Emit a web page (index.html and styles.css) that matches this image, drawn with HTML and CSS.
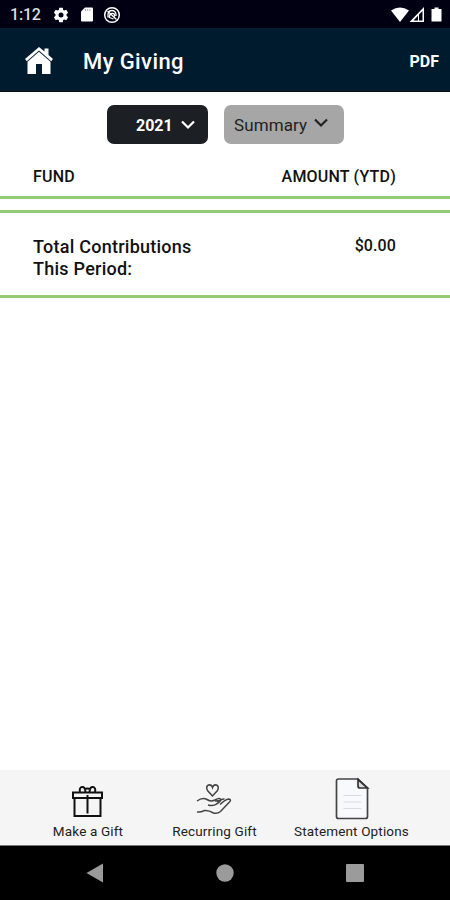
FILE: index.html
```
<!DOCTYPE html>
<html lang="en">
<head>
    <meta charset="UTF-8">
    <meta name="viewport" content="width=device-width, initial-scale=1.0">
    <title>My Giving</title>
    <link rel="stylesheet" href="styles.css">
</head>
<body>
    <div class="status-bar">
        <span class="clock">1:12</span>
        <svg class="icon-gear" width="16" height="16" viewBox="0 0 16 16">
            <path fill="#fff" fill-rule="evenodd" d="M6.2 0.8h3.6l.4 2.1 1.1.7 2-.8 1.8 3-1.6 1.4v1.6l1.6 1.4-1.8 3-2-.8-1.1.7-.4 2.1H6.2l-.4-2.1-1.1-.7-2 .8-1.8-3 1.6-1.4V7.200L.9 5.800l1.800-3 2 .8 1.100-.7zM8 5.500a2.500 2.500 0 1 0 0 5 2.500 2.500 0 0 0 0-5z"/>
        </svg>
        <svg class="icon-card" width="12" height="15" viewBox="0 0 12 15">
            <path fill="#fff" d="M4 .5h6.800q1.200 0 1.200 1.200v11.600q0 1.200-1.200 1.200H1.200Q0 14.500 0 13.300V4.500z"/>
            <path stroke="#99a" stroke-width=".8" d="M4.500 2v2M6.700 2v2M8.900 2v2"/>
        </svg>
        <svg class="icon-circle" width="18" height="18" viewBox="0 0 18 18" fill="none" stroke="#fff">
            <circle cx="9" cy="9" r="7.300" stroke-width="1.500"/>
            <path stroke-width="1.300" d="M5 11.500V8q.5-3.500 4-3.500t4 4v1.500M4.500 5l9 8.500M6.500 12q-.5-4 2.500-4.500t2.500 3M6.500 11.500l4 1.500"/>
        </svg>
        <svg class="icon-signal" width="53" height="16" viewBox="0 0 53 16">
            <path fill="#fff" d="M0 3.500Q9 -2.500 18 3.500L9 15z"/>
            <path fill="#fff" fill-rule="evenodd" d="M33 0v15H18.500zM31.500 4L28 7.600v5.900h3.500zM27 8.700l-4.500 4.800H27z"/>
            <path fill="#fff" d="M43.500.5h4V2H50.500v12.500h-10V2h3z"/>
        </svg>
    </div>
    <header class="header">
        <svg class="icon-home" width="30" height="29" viewBox="0 0 30 29">
            <path fill="#fff" d="M15 1L20.500 5.500V2.500h4v6.500L29 13l-1.800 2.200L15 4.600 2.800 15.200 1 13z"/>
            <path fill="#fff" d="M15 5.700l11.500 10V28H18V18h-6v10H3.500V15.700z"/>
        </svg>
        <h1>My Giving</h1>
        <span class="pdf">PDF</span>
    </header>
    <main>
        <div class="filters">
            <button class="filter year">
                <span>2021</span>
                <svg width="14" height="10" viewBox="0 0 14 10"><path class="chevron" d="M1 1.500l6 6 6-6"/></svg>
            </button>
            <button class="filter summary">
                <span>Summary</span>
                <svg width="14" height="10" viewBox="0 0 14 10"><path class="chevron" d="M1 1.500l6 6 6-6"/></svg>
            </button>
        </div>
        <div class="table-head">
            <span class="fund">FUND</span>
            <span class="amount">AMOUNT (YTD)</span>
        </div>
        <div class="total">
            <span class="total-label">Total Contributions<br>This Period:</span>
            <span class="total-value">$0.00</span>
        </div>
    </main>
    <footer class="tabs">
        <div class="tab gift">
            <svg width="34" height="44" viewBox="0 0 34 44" fill="none" stroke="#111" stroke-width="2">
                <path d="M2 15.500h29V21H2zM3.500 21V39h26V21M16.500 18v18.500"/>
                <path d="M14.500 15Q14 9.500 11 10t-2 5M18.500 15Q19 9.500 22 10t2 5M13.500 12q3-1 6 0"/>
            </svg>
            <span>Make a Gift</span>
        </div>
        <div class="tab recurring">
            <svg width="40" height="44" viewBox="0 0 40 44" fill="none" stroke="#444" stroke-width="1.500">
                <path d="M17.500 19L12.500 13.500q-2-4 1-5.500 3-.7 4 2.500 1-3.200 4-2.500 3 1.500 1 5.500z"/>
                <path d="M2 24Q7.500 20 12 22.500q4 2.500 8 .5 4-2.500 5.500-1t-4 5q-3 2.500-8.500 1"/>
                <path d="M22.500 25q4-3.500 7-3M25 27.500q5-5 9-5.500 3 .5 0 3.500L25.500 34.500q-3 2.500-7 1.500-5-3-9-2.500-4 2-7.500 1.500M20 24l5-.5"/>
            </svg>
            <span>Recurring Gift</span>
        </div>
        <div class="tab statement">
            <svg width="36" height="44" viewBox="0 0 36 44" fill="none">
                <path fill="#f8f9fc" stroke="#444" stroke-width="1.700" d="M4.500 2H24l9.500 9v28.500q0 2-2 2h-27q-2 0-2-2V4q0-2 2-2z"/>
                <path fill="#ddd" stroke="#333" stroke-width="1.700" d="M24 2.500V9q0 2 2 2h7.500z"/>
                <path stroke="#d9dce5" stroke-width="1.200" d="M9.500 18.500h18M9.500 25h18M9.500 31.500h18"/>
            </svg>
            <span>Statement Options</span>
        </div>
    </footer>
    <nav class="nav-bar">
        <svg width="18" height="20" viewBox="0 0 18 20"><path fill="#9b9b9b" d="M17 .5v19L.5 10z"/></svg>
        <svg width="18" height="18" viewBox="0 0 18 18"><circle fill="#9b9b9b" cx="9" cy="9" r="8.700"/></svg>
        <svg width="18" height="18" viewBox="0 0 18 18"><rect fill="#9b9b9b" width="18" height="18" rx="1"/></svg>
    </nav>
</body>
</html>
```
FILE: styles.css
```
* {
    box-sizing: border-box;
}
body {
    font-family: Roboto, "Liberation Sans", sans-serif;
    display: flex;
    flex-direction: column;
    height: 900px;
    margin: 0;
    background-color: #fff;
    color: #111;
}
svg {
    display: block;
    flex: none;
}
.status-bar {
    display: flex;
    align-items: center;
    height: 28px;
    padding: 1px 6px 0 10px;
    background-color: #000012;
    color: #ddd;
}
.clock {
    width: 43px;
    font-size: 16px;
    font-weight: 500;
    letter-spacing: -0.2px;
}
.icon-card {
    margin-left: 12px;
}
.icon-circle {
    margin-left: 10px;
}
.icon-signal {
    margin-left: auto;
}
.header {
    display: flex;
    align-items: center;
    height: 64px;
    padding: 4px 11px 0 24px;
    background-color: #001a2e;
    border-bottom: 1px solid #111;
    color: #fff;
}
.icon-home {
    margin-top: -3px;
}
.header h1 {
    margin: 0 0 0 29px;
    font-size: 22px;
    font-weight: 500;
    letter-spacing: 0.4px;
}
.pdf {
    margin-left: auto;
    font-size: 16px;
    font-weight: 700;
}
main {
    flex: 1;
}
.filters {
    display: flex;
    gap: 16px;
    height: 65px;
    padding: 13px 0 0 107px;
}
.filter {
    display: flex;
    align-items: center;
    height: 39px;
    padding: 0;
    border: 0;
    border-radius: 7px;
    font-family: inherit;
    font-size: 17px;
}
.year {
    width: 101px;
    padding: 2px 0 0 29px;
    gap: 8px;
    background-color: #1c1f24;
    color: #fff;
    font-size: 16px;
    font-weight: 700;
}
.summary {
    width: 120px;
    padding-left: 10px;
    gap: 7px;
    background-color: #a6a6a6;
    color: #222;
    letter-spacing: 0.1px;
}
.chevron {
    fill: none;
    stroke: currentColor;
    stroke-width: 2.2;
}
.year svg {
    margin-top: -2px;
}
.summary svg {
    margin-top: -3px;
}
.table-head {
    display: flex;
    justify-content: space-between;
    align-items: center;
    height: 42px;
    padding: 0 54px 0 33px;
    border-bottom: 3px solid #94cb74;
    font-size: 16px;
    font-weight: 500;
    letter-spacing: 0.2px;
}
.total {
    display: flex;
    justify-content: space-between;
    height: 88px;
    margin-top: 11px;
    padding: 23px 54px 0 33px;
    border-top: 3px solid #94cb74;
    border-bottom: 3px solid #94cb74;
    font-size: 18px;
    font-weight: 500;
    letter-spacing: 0.25px;
    line-height: 22px;
}
.total-value {
    font-size: 16px;
    line-height: 20px;
    letter-spacing: 0.1px;
}
.tabs {
    display: flex;
    height: 76px;
    padding: 7px 41px 0 52px;
    gap: 48px;
    background-color: #f6f5f6;
    border-bottom: 1px solid #777;
}
.tab {
    display: flex;
    flex-direction: column;
    align-items: center;
    gap: 2px;
    font-size: 13.5px;
    line-height: 16px;
    letter-spacing: 0.15px;
    color: #222;
    white-space: nowrap;
}
.gift {
    width: 72px;
}
.recurring {
    width: 85px;
}
.statement {
    width: 115px;
    margin-left: -11px;
}
.nav-bar {
    display: flex;
    justify-content: space-between;
    align-items: center;
    height: 54px;
    padding: 0 86px;
    background-color: #000;
}
```
